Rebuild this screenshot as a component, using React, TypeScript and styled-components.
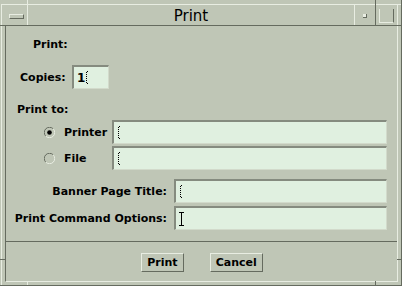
import React from 'react';
import styled, { createGlobalStyle } from 'styled-components';

const BG = '#bfc6b6';
const DARK = '#656b5f';
const LIGHT = '#e8ede2';
const FIELD = '#e0f0e0';

const Global = createGlobalStyle`
  html, body {
    margin: 0;
    padding: 0;
    background: ${BG};
  }
  body {
    font-family: "DejaVu Sans", sans-serif;
  }
`;

const Frame = styled.div`
  position: relative;
  box-sizing: border-box;
  width: 402px;
  height: 286px;
  padding: 4px 0 0 1px;
  background: ${BG};
  border-right: 1px solid ${DARK};
  border-bottom: 1px solid ${DARK};
  overflow: hidden;
`;

const FrameInner = styled.div`
  box-sizing: border-box;
  height: 100%;
  padding: 0 3px 3px 3px;
  border-top: 1px solid ${LIGHT};
  border-left: 1px solid ${LIGHT};
  display: flex;
`;

const Tick = styled.span<{ $light?: boolean }>`
  position: absolute;
  background: ${(p) => (p.$light ? LIGHT : DARK)};
`;

const Window = styled.div`
  flex: 1;
  display: flex;
  flex-direction: column;
  border-right: 1px solid ${LIGHT};
`;

const TitleBar = styled.div`
  display: flex;
  height: 20px;
  border-bottom: 1px solid ${DARK};
`;

const MenuButton = styled.div`
  width: 22px;
  display: flex;
  align-items: center;
  justify-content: center;
  &::before {
    content: '';
    display: block;
    box-sizing: border-box;
    width: 15px;
    height: 5px;
    margin-top: 2px;
    border-top: 1px solid ${LIGHT};
    border-left: 1px solid ${LIGHT};
    border-bottom: 1px solid ${DARK};
    border-right: 1px solid ${DARK};
  }
`;

const Title = styled.div`
  flex: 1;
  border-left: 1px solid ${LIGHT};
  display: flex;
  align-items: center;
  justify-content: center;
  font-family: "DejaVu Sans", sans-serif;
  font-size: 15px;
  color: #000;
  padding-top: 1px;
`;

const MinButton = styled.div`
  width: 20px;
  border-left: 1px solid ${LIGHT};
  border-right: 1px solid ${DARK};
  display: flex;
  align-items: center;
  justify-content: center;
  &::before {
    content: '';
    display: block;
    box-sizing: border-box;
    width: 4px;
    height: 4px;
    margin-top: 1px;
    background: ${LIGHT};
    border-right: 1px solid ${DARK};
    border-bottom: 1px solid ${DARK};
  }
`;

const MaxButton = styled.div`
  width: 21px;
  display: flex;
  justify-content: center;
  &::before {
    content: '';
    display: block;
    box-sizing: border-box;
    width: 15px;
    height: 14px;
    margin-top: 4px;
    border-left: 1px solid ${LIGHT};
    border-bottom: 1px solid ${LIGHT};
    border-right: 1px solid ${DARK};
  }
`;

const Client = styled.div`
  flex: 1;
  display: flex;
  flex-direction: column;
  border-left: 1px solid ${DARK};
  border-bottom: 1px solid ${LIGHT};
  font-family: "DejaVu Sans", sans-serif;
  font-weight: bold;
  font-size: 11px;
  color: #000;
`;

const Heading = styled.div<{ $top: number; $left: number }>`
  height: 13px;
  line-height: 13px;
  margin-top: ${(p) => p.$top}px;
  padding-left: ${(p) => p.$left}px;
`;

const Row = styled.div<{ $top: number; $right?: number }>`
  display: flex;
  align-items: center;
  height: 24px;
  margin-top: ${(p) => p.$top}px;
  margin-right: ${(p) => p.$right ?? 10}px;
`;

const Label = styled.div<{ $width: number; $left?: number; $alignRight?: boolean }>`
  box-sizing: border-box;
  width: ${(p) => p.$width}px;
  padding-left: ${(p) => p.$left ?? 0}px;
  padding-right: ${(p) => (p.$alignRight ? 7 : 0)}px;
  text-align: ${(p) => (p.$alignRight ? 'right' : 'left')};
  white-space: nowrap;
  flex-shrink: 0;
`;

const RadioCell = styled.label`
  box-sizing: border-box;
  width: 106px;
  padding-left: 38px;
  display: flex;
  align-items: center;
  gap: 9px;
  flex-shrink: 0;
`;

const Field = styled.div<{ $width?: number }>`
  box-sizing: border-box;
  height: 24px;
  ${(p) => (p.$width ? `width: ${p.$width}px;` : 'flex: 1;')}
  background: ${FIELD};
  border-top: 2px solid #858b7f;
  border-left: 2px solid #858b7f;
  border-bottom: 1px solid #d2dacb;
  border-right: 1px solid #d2dacb;
  display: flex;
  align-items: center;
  padding-left: 3px;
  font-size: 12px;
`;

const Separator = styled.div`
  height: 1px;
  margin-top: 11px;
  background: ${DARK};
`;

const ButtonRow = styled.div`
  display: flex;
  justify-content: center;
  gap: 26px;
  margin-top: 11px;
  padding-left: 1px;
`;

const Button = styled.button`
  box-sizing: border-box;
  height: 19px;
  padding: 0 5px;
  background: ${BG};
  border-top: 1px solid ${LIGHT};
  border-left: 1px solid ${LIGHT};
  border-bottom: 1px solid ${DARK};
  border-right: 1px solid ${DARK};
  font-family: "DejaVu Sans", sans-serif;
  font-weight: bold;
  font-size: 11px;
  color: #000;
  line-height: 17px;
`;

const DottedCursor = () => (
  <svg width="4" height="13" viewBox="0 0 4 13">
    <rect x="2" y="0" width="1" height="1" fill="#000" />
    <rect x="1" y="1" width="1" height="1" fill="#000" />
    <rect x="1" y="3" width="1" height="1" fill="#000" />
    <rect x="1" y="5" width="1" height="1" fill="#000" />
    <rect x="1" y="7" width="1" height="1" fill="#000" />
    <rect x="1" y="9" width="1" height="1" fill="#000" />
    <rect x="1" y="11" width="1" height="1" fill="#000" />
    <rect x="2" y="12" width="1" height="1" fill="#000" />
  </svg>
);

const IBeam = () => (
  <svg width="6" height="14" viewBox="0 0 6 14">
    <path d="M0 0.5h5M0 13.5h5M2.5 0v14" stroke="#000" strokeWidth="1" fill="none" />
  </svg>
);

const Radio = ({ checked }: { checked?: boolean }) => (
  <svg width="11" height="11" viewBox="0 0 11 11">
    <path d="M9.2 1.8A5 5 0 0 0 1.8 9.2" stroke={DARK} strokeWidth="1" fill="none" />
    <path d="M1.8 9.2A5 5 0 0 0 9.2 1.8" stroke={LIGHT} strokeWidth="1" fill="none" />
    {checked && <circle cx="5.5" cy="5.5" r="2.3" fill="#000" />}
  </svg>
);

const App = () => (
  <>
    <Global />
    <Frame>
      <Tick style={{ left: 27, top: 0, width: 1, height: 5 }} $light />
      <Tick style={{ left: 375, top: 0, width: 1, height: 5 }} />
      <Tick style={{ left: 0, top: 25, width: 5, height: 1 }} />
      <Tick style={{ left: 397, top: 25, width: 5, height: 1 }} />
      <Tick style={{ left: 0, top: 259, width: 5, height: 1 }} />
      <Tick style={{ left: 397, top: 259, width: 5, height: 1 }} />
      <Tick style={{ left: 27, top: 281, width: 1, height: 5 }} $light />
      <Tick style={{ left: 375, top: 281, width: 1, height: 5 }} />
      <FrameInner>
        <Window>
          <TitleBar>
            <MenuButton />
            <Title>Print</Title>
            <MinButton />
            <MaxButton />
          </TitleBar>
          <Client>
            <Heading $top={12} $left={27}>Print:</Heading>
            <Row $top={14}>
              <Label $width={66} $left={14}>Copies:</Label>
              <Field $width={37}>
                <span>1</span>
                <DottedCursor />
              </Field>
            </Row>
            <Heading $top={14} $left={11}>Print to:</Heading>
            <Row $top={4}>
              <RadioCell>
                <Radio checked />
                <span>Printer</span>
              </RadioCell>
              <Field>
                <DottedCursor />
              </Field>
            </Row>
            <Row $top={2}>
              <RadioCell>
                <Radio />
                <span>File</span>
              </RadioCell>
              <Field>
                <DottedCursor />
              </Field>
            </Row>
            <Row $top={9}>
              <Label $width={168} $alignRight>Banner Page Title:</Label>
              <Field>
                <DottedCursor />
              </Field>
            </Row>
            <Row $top={3}>
              <Label $width={168} $alignRight>Print Command Options:</Label>
              <Field>
                <IBeam />
              </Field>
            </Row>
            <Separator />
            <ButtonRow>
              <Button>Print</Button>
              <Button>Cancel</Button>
            </ButtonRow>
          </Client>
        </Window>
      </FrameInner>
    </Frame>
  </>
);

export default App;
